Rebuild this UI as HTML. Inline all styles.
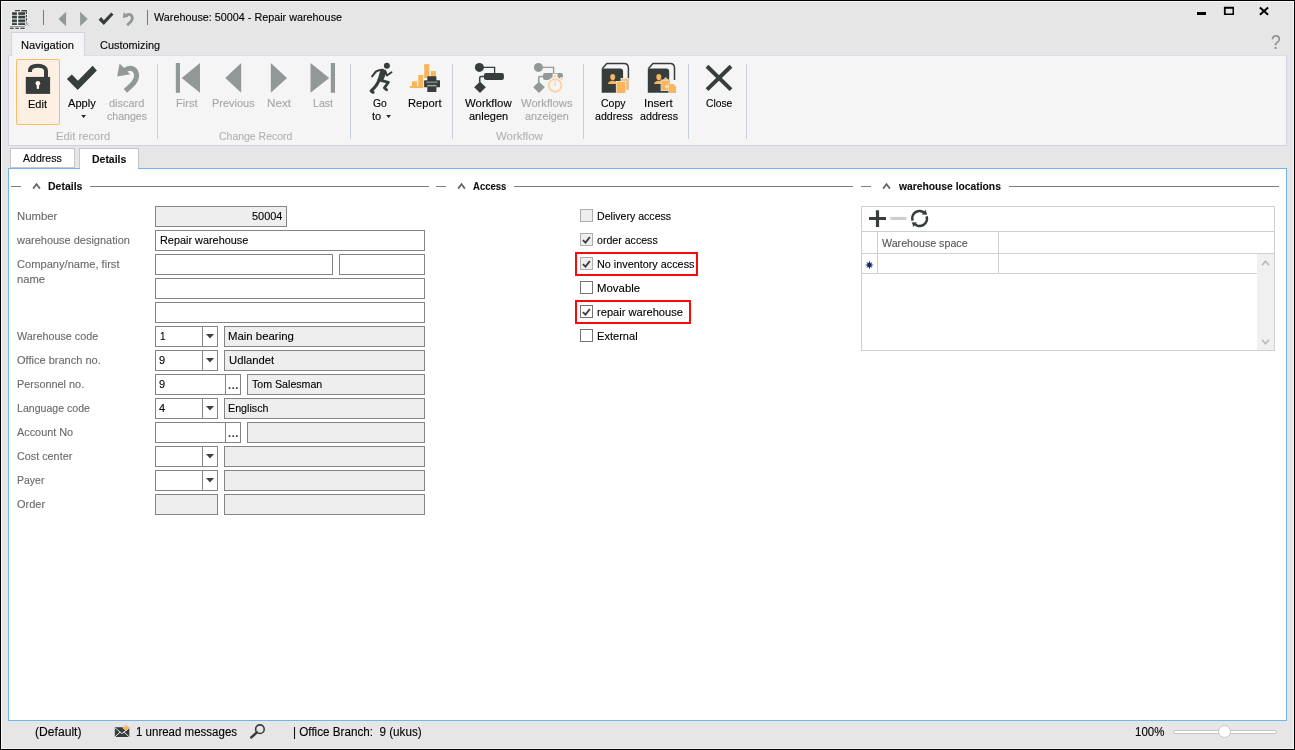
<!DOCTYPE html>
<html lang="en"><head><meta charset="utf-8"><title>Warehouse: 50004 - Repair warehouse</title>
<style>
*{box-sizing:border-box;margin:0;padding:0}
html,body{width:1295px;height:750px;overflow:hidden;background:#e6e6e6}
body{position:relative;font-family:"Liberation Sans",sans-serif;font-size:11px;color:#1e1e1e}
#w{position:absolute;left:0;top:0;width:1295px;height:750px;will-change:transform}
.a{position:absolute}
.t{position:absolute;white-space:pre;line-height:20px;transform-origin:0 0;-webkit-text-stroke:.12px currentColor}
.frame{left:0;top:0;width:1295px;height:750px;border:1px solid #000;pointer-events:none}
.hl{left:1px;top:1px;width:1293px;height:748px;border:1px solid #f6f6f6}
.ribbon{left:8px;top:55px;width:1279px;height:91px;background:#f5f5f5;border:1px solid #d0d3e2;border-top-color:#dadcea}
.navtab{left:11px;top:32px;width:74px;height:24px;background:#f5f5f5;border:1px solid #d0d3e2;border-bottom:0}
.sep{width:1px;background:#c9cde0;top:64px;height:75px}
.editbtn{left:16px;top:59px;width:44px;height:66px;background:#fdf0e2;border:1px solid #f6bc6a;border-radius:2px}
.pane{left:8px;top:168px;width:1279px;height:553px;background:#fff;border:1px solid #73b5ea}
.dtab{background:#fff;border:1px solid #c6c6c6}
.f{position:absolute;height:21px;border:1px solid #848484;background:#fff}
.f.d{background:#eee}
.cb{position:absolute;width:13px;height:13px;border:1px solid #747474;background:#fff}
.cb.d{border-color:#adadad;background:#eee}
.ln{position:absolute;height:1px;background:#7d7d7d}
.red{position:absolute;border:2px solid #f70a0a}
.g{position:absolute;background:#cfcfcf}
svg{position:absolute;overflow:visible}
</style></head>
<body>
<div id="w">
<div class="a hl"></div>
<svg style="left:9px;top:9px" width="21" height="21" viewBox="9 9 21 21">
<path d="M14.600 9.400h13v13.600l-2 2.400v4h-16.200v-3.600h1.800v-13.400z" fill="#f1f1f1"/>
<rect x="12" y="12.300" width="4.900" height="12.700" fill="#b9bcbc"/><rect x="18.300" y="12.300" width="6.800" height="12.700" fill="#b9bcbc"/>
<g fill="#373d3d">
<path d="M15.400 10h4.600v1.200h-5.700zM21.800 10h5.200v1.600h-6.200z"/>
<rect x="12" y="12.300" width="4.900" height="2.500"/><rect x="18.300" y="12.300" width="6.800" height="2.500"/>
<rect x="12" y="16" width="4.900" height="2.200"/><rect x="18.300" y="16" width="6.800" height="2.200"/>
<rect x="12" y="19.700" width="4.900" height="2.200"/><rect x="18.300" y="19.700" width="6.800" height="2.200"/>
<rect x="12" y="23.200" width="4.900" height="1.800"/><rect x="18.300" y="23.200" width="6.800" height="1.800"/>
<rect x="9.900" y="26.200" width="15" height="0.900" fill="#7a7f7f"/>
<rect x="9.900" y="27.700" width="3.800" height="1.200"/><rect x="15.300" y="27.700" width="3.600" height="1.200"/><rect x="20.300" y="27.700" width="4.400" height="1.200"/>
</g>
<path d="M26.400 11.500v11" stroke="#373d3d" stroke-width="1.100" stroke-dasharray="2.400 1" fill="none"/>
<path d="M25.400 25.800l2.600-2.600M26.400 23.400l2 2" stroke="#373d3d" stroke-width="0.700" stroke-dasharray="1.200 0.800" fill="none"/>
</svg>
<div class="a" style="left:43px;top:10px;width:1px;height:15px;background:#777"></div>
<div class="a" style="left:147px;top:10px;width:1px;height:15px;background:#777"></div>
<svg style="left:56px;top:8px" width="82" height="22" viewBox="56 8 82 22">
<path d="M58.5 19l7.6-7.2v14.4z" fill="#929797"/>
<path d="M87.7 19l-7.6-7.2v14.4z" fill="#929797"/>
<path d="M98.600 19.700L101.200 17.100L103.800 20.200L111.200 12.500L113.500 14.500L103.800 25z" fill="#373d3d"/>
<path d="M123.800 12l-1.100 6 5.600-1.300z" fill="#929797"/>
<path d="M126.300 15.300c3-2.200 6.200-0.300 6 3.200-0.200 2.800-2.900 4.600-5.200 6.600" stroke="#929797" stroke-width="2.800" fill="none"/>
</svg>
<div class="a" style="left:1197px;top:12px;width:9px;height:3px;background:#000"></div>
<svg style="left:1223px;top:6px" width="12" height="10" viewBox="1223 6 12 10"><path d="M1223.900 6.800h10.100v8.200h-10.100zM1225.700 8.800v4.800h6.800v-4.800z" fill="#000" fill-rule="evenodd"/></svg>
<svg style="left:1258px;top:6px" width="12" height="10" viewBox="1258 6 12 10"><path d="M1259.900 7.400l8.200 7.400M1268.100 7.400l-8.200 7.400" stroke="#000" stroke-width="2" fill="none"/></svg>
<div class="t" style="left:1271px;top:30px;font-size:20px;line-height:24px;color:#8e8e8e;transform:scaleX(.87)">?</div>
<div class="a ribbon"></div>
<div class="a navtab"></div>
<div class="a editbtn"></div>
<div class="a sep" style="left:157px"></div>
<div class="a sep" style="left:350px"></div>
<div class="a sep" style="left:452px"></div>
<div class="a sep" style="left:583px"></div>
<div class="a sep" style="left:688px"></div>
<div class="a sep" style="left:746px"></div>
<svg style="left:0;top:55px" width="760" height="70" viewBox="0 55 760 70">
<!-- lock -->
<rect x="25.8" y="76.9" width="24.3" height="17" fill="#373d3d"/>
<path d="M30 72v-1c0-3 2.6-5.2 7.8-5.2s8.200 2.200 8.200 5.200v6.500" stroke="#373d3d" stroke-width="4" fill="none"/>
<circle cx="37.900" cy="83.300" r="2.300" fill="#fff9f2"/><rect x="36.700" y="83.400" width="2.400" height="5.600" rx=".9" fill="#fff9f2"/>
<!-- apply check -->
<path d="M66.900 79.100l4.900-4.500 6.100 6.100 14.700-14.900 4.300 4.600-19.200 19.700z" fill="#373d3d"/>
<path d="M81.200 115h4.800l-2.400 3z" fill="#222"/>
<!-- discard -->
<path d="M119.600 63.600l-2.400 12.800 12.900-2.200z" fill="#929797"/>
<path d="M124.500 70.500c6.500-4.800 12.300-1 12.100 5.500-.2 6.300-5.800 9.800-11.200 14.900" stroke="#929797" stroke-width="5" fill="none"/>
<!-- first prev next last -->
<g fill="#929797">
<rect x="175.800" y="63" width="4.200" height="29.800"/><path d="M181.700 77.900l18.300-14.900v29.800z"/>
<path d="M225.300 77.900l15.900-14.900v29.800z"/>
<path d="M287 77.900l-16.200-14.900v29.800z"/>
<path d="M329.200 77.900l-18.700-14.900v29.800z"/><rect x="330.800" y="63" width="4.200" height="29.800"/>
</g>
<!-- runner -->
<g fill="none" stroke="#373d3d" stroke-linecap="round" stroke-linejoin="round">
<circle cx="386.900" cy="65.800" r="3" fill="#373d3d" stroke="none"/>
<path d="M381 68.800L385.800 70L386.400 72.600L382.700 81.700L377.400 80.200L379.800 72.200z" fill="#373d3d" stroke="none"/>
<path d="M382.800 69.700c-2.600 0-5 .6-7 1.900l-3.600 4.800" stroke-width="2.100"/>
<path d="M385.300 71.200l1.600 4.300 4.600-3.200" stroke-width="2"/>
<path d="M380.800 80.300l7.600 2-4 5.600 2.200 1.900" stroke-width="2.800"/>
<path d="M379.200 79.800c-1.400 4-4.200 7.800-8 11.200l1.800 1.300" stroke-width="3.200"/>
</g>
<path d="M386.200 115h4.800l-2.400 3z" fill="#222"/>
<!-- report -->
<g fill="#f9b55c">
<rect x="410" y="86" width="13.200" height="2"/><rect x="412" y="81.300" width="4.900" height="5"/>
<rect x="418.200" y="75" width="5" height="13"/><rect x="424.200" y="64.100" width="5.200" height="14"/><rect x="430.800" y="71" width="5" height="7"/>
</g>
<g fill="#373d3d">
<rect x="427.300" y="76.200" width="9.100" height="5" rx=".6"/>
<rect x="424.100" y="80.200" width="15.900" height="7" rx=".5"/>
<rect x="426.300" y="81.300" width="11.100" height="1.900" fill="#767b7b"/>
<rect x="427.300" y="85.400" width="9.100" height="1" fill="#f5f5f5"/>
<rect x="427.300" y="86.400" width="9.100" height="5.600" rx=".6"/>
</g>
<!-- workflow -->
<g fill="#373d3d" stroke="#373d3d">
<circle cx="479.400" cy="67.400" r="4.500" stroke="none"/>
<path d="M483 67.400h11.600v6" stroke-width="1.300" fill="none"/>
<rect x="484" y="73" width="19.900" height="6.900" rx="2" stroke="none"/>
<path d="M485 76.500h-3.800q-1.500 0-1.500 1.500v4" stroke-width="1.500" fill="none"/>
<path d="M480 81.500l5.800 5.800-5.800 5.800-5.800-5.800z" stroke="none"/>
</g>
<!-- workflows disabled -->
<g fill="#929797" stroke="#929797">
<circle cx="538.400" cy="67.400" r="4.500" stroke="none"/>
<path d="M542 67.400h11.600v6" stroke-width="1.300" fill="none"/>
<rect x="543" y="73" width="19.900" height="6.900" rx="2" stroke="none"/>
<path d="M544 76.500h-3.800q-1.500 0-1.500 1.500v4" stroke-width="1.500" fill="none"/>
<path d="M539 81.500l5.800 5.800-5.800 5.800-5.800-5.800z" stroke="none"/>
</g>
<circle cx="555.100" cy="85.400" r="8.400" fill="#f5f5f5"/>
<rect x="552.600" y="73.600" width="5" height="4.600" fill="#f5f5f5"/>
<circle cx="555.100" cy="85.400" r="6.300" fill="#f7f5f2" stroke="#f9d3a3" stroke-width="1.900"/>
<rect x="554" y="75" width="2.200" height="2.200" fill="#f9d3a3"/>
<rect x="554.500" y="80.600" width="1.200" height="5.400" fill="#f9d3a3"/>
<circle cx="561.800" cy="78.800" r="1.900" fill="#f5f5f5"/><circle cx="561.800" cy="78.800" r="1.100" fill="#f9d3a3"/>
<!-- copy address -->
<g id="book">
<path d="M602.400 68.400l4.400-4.900h17.200q4.400 0 4.400 4.400v12" stroke="#373d3d" stroke-width="1.500" fill="#f5f5f5"/>
<path d="M601.700 68.400h18.400q3 0 3 3v21.300h-21.400z" fill="#373d3d"/>
<ellipse cx="612.700" cy="77" rx="2.500" ry="3.100" fill="#f9b55c"/>
<path d="M608 83.900c0-2 2.200-2.600 3.400-3.200h2.600c1.200.6 3.300 1.200 3.300 3.200z" fill="#f9b55c"/>
</g>
<rect x="620.600" y="78" width="8.800" height="12.200" fill="#f5f5f5"/>
<rect x="621.100" y="78.500" width="7.900" height="11.300" fill="#e9c193"/>
<rect x="615.900" y="81" width="10" height="12.400" fill="#f5f5f5"/>
<rect x="616.500" y="81.600" width="8.900" height="11.400" fill="#f9b55c"/>
<!-- insert address -->
<g transform="translate(46.100 0)">
<path d="M602.400 68.400l4.400-4.900h17.200q4.400 0 4.400 4.400v12" stroke="#373d3d" stroke-width="1.500" fill="#f5f5f5"/>
<path d="M601.700 68.400h18.400q3 0 3 3v21.300h-21.400z" fill="#373d3d"/>
<ellipse cx="612.700" cy="77" rx="2.500" ry="3.100" fill="#f9b55c"/>
<path d="M608 83.900c0-2 2.200-2.600 3.400-3.200h2.600c1.200.6 3.300 1.200 3.300 3.200z" fill="#f9b55c"/>
</g>
<rect x="660.700" y="79.600" width="9.800" height="11.400" fill="#f5f5f5"/>
<rect x="661.200" y="80.100" width="8.800" height="10.400" fill="#f9b55c"/>
<path d="M663.200 80.600c0-1.400 1-1.400 1.400-1.500.2-1 .5-1.500 1.100-1.500s.9.500 1.100 1.500c.4.100 1.400.1 1.400 1.500z" fill="#f9b55c" stroke="#f5f5f5" stroke-width=".5"/>
<path d="M664.500 86.500l2.400-2.200v1.500h2v1.500h-2v1.500z" fill="#fbe3c3"/>
<rect x="668.500" y="83.500" width="8.100" height="10.100" fill="#f5f5f5"/>
<path d="M669 84h5l2.100 2.100v7h-7.100z" fill="#f9b55c"/>
<path d="M674 84v2.100h2.100z" fill="#fbe3c3"/>
<!-- close -->
<path d="M707 66.300l24 23.300M731 66.300l-24 23.300" stroke="#373d3d" stroke-width="4" fill="none"/>
</svg>
<div class="a pane"></div>
<div class="a dtab" style="left:10px;top:148px;width:65px;height:20px"></div>
<div class="a dtab" style="left:79px;top:148px;width:60px;height:20px;border-bottom:0"></div><div class="a" style="left:80px;top:168px;width:58px;height:1px;background:#fff"></div>
<div class="ln" style="left:11px;top:186px;width:10px"></div>
<svg style="left:32px;top:182px" width="9" height="8" viewBox="0 0 9 8"><path d="M1.100 6.600l3.400-4.300 3.400 4.300" stroke="#666" stroke-width="1.800" fill="none"/></svg>
<div class="ln" style="left:90px;top:186px;width:339px"></div>
<div class="ln" style="left:436px;top:186px;width:10px"></div>
<svg style="left:457px;top:182px" width="9" height="8" viewBox="0 0 9 8"><path d="M1.100 6.600l3.400-4.300 3.400 4.300" stroke="#666" stroke-width="1.800" fill="none"/></svg>
<div class="ln" style="left:514px;top:186px;width:339px"></div>
<div class="ln" style="left:861px;top:186px;width:10px"></div>
<svg style="left:882px;top:182px" width="9" height="8" viewBox="0 0 9 8"><path d="M1.100 6.600l3.400-4.300 3.400 4.300" stroke="#666" stroke-width="1.800" fill="none"/></svg>
<div class="ln" style="left:1009px;top:186px;width:270px"></div>
<div class="f d" style="left:155px;top:206px;width:132px"></div>
<div class="f" style="left:155px;top:230px;width:270px"></div>
<div class="f" style="left:155px;top:254px;width:178px"></div>
<div class="f" style="left:339px;top:254px;width:86px"></div>
<div class="f" style="left:155px;top:278px;width:270px"></div>
<div class="f" style="left:155px;top:302px;width:270px"></div>
<div class="f" style="left:155px;top:326px;width:63px"></div>
<div class="a" style="left:202px;top:327px;width:1px;height:19px;background:#848484"></div>
<svg style="left:206px;top:334px" width="8" height="5" viewBox="0 0 8 5"><path d="M0 0h8l-4 4.500z" fill="#404040"/></svg>
<div class="f d" style="left:224px;top:326px;width:201px"></div>
<div class="f" style="left:155px;top:350px;width:63px"></div>
<div class="a" style="left:202px;top:351px;width:1px;height:19px;background:#848484"></div>
<svg style="left:206px;top:358px" width="8" height="5" viewBox="0 0 8 5"><path d="M0 0h8l-4 4.500z" fill="#404040"/></svg>
<div class="f d" style="left:224px;top:350px;width:201px"></div>
<div class="f" style="left:155px;top:374px;width:71px"></div>
<div class="f" style="left:225px;top:374px;width:16px"></div>
<div class="t" style="left:228px;top:375.1px;font-weight:700;letter-spacing:.62px;color:#3c3c3c">...</div>
<div class="f d" style="left:247px;top:374px;width:178px"></div>
<div class="f" style="left:155px;top:398px;width:63px"></div>
<div class="a" style="left:202px;top:399px;width:1px;height:19px;background:#848484"></div>
<svg style="left:206px;top:406px" width="8" height="5" viewBox="0 0 8 5"><path d="M0 0h8l-4 4.500z" fill="#404040"/></svg>
<div class="f d" style="left:224px;top:398px;width:201px"></div>
<div class="f" style="left:155px;top:422px;width:71px"></div>
<div class="f" style="left:225px;top:422px;width:16px"></div>
<div class="t" style="left:228px;top:423.1px;font-weight:700;letter-spacing:.62px;color:#3c3c3c">...</div>
<div class="f d" style="left:247px;top:422px;width:178px"></div>
<div class="f" style="left:155px;top:446px;width:63px"></div>
<div class="a" style="left:202px;top:447px;width:1px;height:19px;background:#848484"></div>
<svg style="left:206px;top:454px" width="8" height="5" viewBox="0 0 8 5"><path d="M0 0h8l-4 4.500z" fill="#404040"/></svg>
<div class="f d" style="left:224px;top:446px;width:201px"></div>
<div class="f" style="left:155px;top:470px;width:63px"></div>
<div class="a" style="left:202px;top:471px;width:1px;height:19px;background:#848484"></div>
<svg style="left:206px;top:478px" width="8" height="5" viewBox="0 0 8 5"><path d="M0 0h8l-4 4.500z" fill="#404040"/></svg>
<div class="f d" style="left:224px;top:470px;width:201px"></div>
<div class="f d" style="left:155px;top:494px;width:63px"></div>
<div class="f d" style="left:224px;top:494px;width:201px"></div>
<div class="cb d" style="left:580px;top:209px"></div>
<div class="cb d" style="left:580px;top:233px"><svg style="left:0;top:0" width="11" height="11" viewBox="0 0 11 11"><path d="M1.900 6.100L4.500 8.600L8.900 3" stroke="#3a3f3f" stroke-width="1.950" fill="none"/></svg></div>
<div class="cb d" style="left:580px;top:257px"><svg style="left:0;top:0" width="11" height="11" viewBox="0 0 11 11"><path d="M1.900 6.100L4.500 8.600L8.900 3" stroke="#3a3f3f" stroke-width="1.950" fill="none"/></svg></div>
<div class="cb" style="left:580px;top:281px"></div>
<div class="cb" style="left:580px;top:305px"><svg style="left:0;top:0" width="11" height="11" viewBox="0 0 11 11"><path d="M1.900 6.100L4.500 8.600L8.900 3" stroke="#3a3f3f" stroke-width="1.950" fill="none"/></svg></div>
<div class="cb" style="left:580px;top:329px"></div>
<div class="red" style="left:575px;top:252px;width:123px;height:24px"></div>
<div class="red" style="left:575px;top:300px;width:116px;height:24px"></div>
<div class="a" style="left:861px;top:206px;width:414px;height:145px;border:1px solid #cfcfcf;background:#fff"></div>
<div class="a" style="left:1257px;top:254px;width:17px;height:96px;background:#f0f0f0"></div>
<div class="g" style="left:861px;top:231px;width:414px;height:1px"></div>
<div class="g" style="left:861px;top:253px;width:414px;height:1px"></div>
<div class="g" style="left:861px;top:273px;width:396px;height:1px"></div>
<div class="g" style="left:877px;top:232px;width:1px;height:42px"></div>
<div class="g" style="left:998px;top:232px;width:1px;height:42px"></div>
<svg style="left:861px;top:206px" width="414" height="145" viewBox="861 206 414 145">
<path d="M877.500 210.200v16.800M869 218.500h17" stroke="#373d3d" stroke-width="3.200" fill="none"/>
<rect x="890.300" y="216.900" width="16.200" height="3.100" fill="#cdcdcd"/>
<path d="M912.6 220.6A7.25 7.25 0 0 1 924.6 213.2" stroke="#373d3d" stroke-width="2.6" fill="none"/>
<path d="M926.6 216.4A7.25 7.25 0 0 1 914.6 223.8" stroke="#373d3d" stroke-width="2.6" fill="none"/>
<path d="M925.7 209.7l1.4 5.1-5.3-.4z" fill="#373d3d"/>
<path d="M911.8 222.300l5.2.2-3.600 4.500z" fill="#373d3d"/>
<path d="M869.4 260.6l.8 2.700 2.300-1.400-1.400 2.300 2.700.8-2.700.8 1.400 2.300-2.300-1.400-.8 2.700-.8-2.700-2.300 1.400 1.400-2.300-2.700-.8 2.700-.8-1.400-2.300 2.300 1.400z" fill="#14266b"/>
<path d="M1262 265.200l3.500-4 3.500 4" stroke="#b8b8b8" stroke-width="1.600" fill="none"/>
<path d="M1262 339.800l3.500 4 3.500-4" stroke="#b8b8b8" stroke-width="1.600" fill="none"/>
</svg>
<svg style="left:110px;top:722px" width="160" height="20" viewBox="110 722 160 20">
<rect x="114.800" y="727.200" width="14.500" height="9.800" fill="#373d3d"/>
<path d="M114.800 727.600l7.200 6 7.300-6M114.800 737l5.400-5M129.300 737l-5.400-5" stroke="#e6e6e6" stroke-width="1" fill="none"/>
<path d="M126 724.400l3.300 3.300-3.300 3.300-3.300-3.300z" fill="#f9b55c" stroke="#e6e6e6" stroke-width=".6"/>
<circle cx="259.900" cy="729.200" r="4.300" stroke="#373d3d" stroke-width="1.600" fill="none"/>
<path d="M256.900 732.400l-5.600 5" stroke="#373d3d" stroke-width="2.600" stroke-linecap="round" fill="none"/>
</svg>
<div class="a" style="left:1173px;top:730px;width:104px;height:4px;background:#fff;border:1px solid #c4c4c4;border-radius:2px"></div>
<div class="a" style="left:1218px;top:725px;width:13px;height:13px;background:#fff;border:1px solid #c4c4c4;border-radius:50%"></div>
<div class="t" style="left:154px;top:7.19px;color:#000;transform:scaleX(0.9814)">Warehouse: 50004 - Repair warehouse</div>
<div class="t" style="left:21px;top:35.19px;color:#000;transform:scaleX(1.0169)">Navigation</div>
<div class="t" style="left:100px;top:35.19px;color:#000;transform:scaleX(0.9924)">Customizing</div>
<div class="t" style="left:28px;top:93.69px;color:#000;transform:scaleX(1.0000)">Edit</div>
<div class="t" style="left:68px;top:92.89px;color:#000;transform:scaleX(1.0109)">Apply</div>
<div class="t" style="left:109px;top:92.89px;color:#a6a6a6;transform:scaleX(0.9956)">discard</div>
<div class="t" style="left:107px;top:105.89px;color:#a6a6a6;transform:scaleX(0.9595)">changes</div>
<div class="t" style="left:56px;top:125.89px;color:#b2b2b2;transform:scaleX(1.0194)">Edit record</div>
<div class="t" style="left:176px;top:92.89px;color:#a6a6a6;transform:scaleX(1.0123)">First</div>
<div class="t" style="left:212px;top:92.89px;color:#a6a6a6;transform:scaleX(0.9976)">Previous</div>
<div class="t" style="left:267px;top:92.89px;color:#a6a6a6;transform:scaleX(1.0605)">Next</div>
<div class="t" style="left:313px;top:92.89px;color:#a6a6a6;transform:scaleX(0.9620)">Last</div>
<div class="t" style="left:219px;top:125.89px;color:#b2b2b2;transform:scaleX(0.9518)">Change Record</div>
<div class="t" style="left:373px;top:92.89px;color:#000;transform:scaleX(0.9455)">Go</div>
<div class="t" style="left:372px;top:105.89px;color:#000;transform:scaleX(1.0000)">to</div>
<div class="t" style="left:408px;top:92.89px;color:#000;transform:scaleX(1.0156)">Report</div>
<div class="t" style="left:465px;top:92.89px;color:#000;transform:scaleX(1.0356)">Workflow</div>
<div class="t" style="left:469px;top:105.89px;color:#000;transform:scaleX(1.0000)">anlegen</div>
<div class="t" style="left:521px;top:92.89px;color:#a6a6a6;transform:scaleX(1.0189)">Workflows</div>
<div class="t" style="left:525px;top:105.89px;color:#a6a6a6;transform:scaleX(0.9816)">anzeigen</div>
<div class="t" style="left:496px;top:125.89px;color:#b2b2b2;transform:scaleX(1.0378)">Workflow</div>
<div class="t" style="left:601px;top:92.89px;color:#000;transform:scaleX(0.9584)">Copy</div>
<div class="t" style="left:595px;top:105.89px;color:#000;transform:scaleX(0.9647)">address</div>
<div class="t" style="left:644px;top:92.89px;color:#000;transform:scaleX(1.0453)">Insert</div>
<div class="t" style="left:640px;top:105.89px;color:#000;transform:scaleX(0.9725)">address</div>
<div class="t" style="left:706px;top:92.89px;color:#000;transform:scaleX(0.9358)">Close</div>
<div class="t" style="left:23px;top:147.69px;color:#000;transform:scaleX(0.9600)">Address</div>
<div class="t" style="left:92px;top:148.69px;color:#111;transform:scaleX(0.9514);font-weight:700">Details</div>
<div class="t" style="left:48px;top:175.99px;color:#111;transform:scaleX(0.9543);font-weight:700">Details</div>
<div class="t" style="left:473px;top:175.99px;color:#111;transform:scaleX(0.8658);font-weight:700">Access</div>
<div class="t" style="left:899px;top:175.99px;color:#111;transform:scaleX(0.9364);font-weight:700">warehouse locations</div>
<div class="t" style="left:17px;top:205.89px;color:#6a6a6a;transform:scaleX(1.0316)">Number</div>
<div class="t" style="left:17px;top:229.89px;color:#6a6a6a;transform:scaleX(0.9973)">warehouse designation</div>
<div class="t" style="left:17px;top:253.79px;color:#6a6a6a;transform:scaleX(1.0099)">Company/name, first</div>
<div class="t" style="left:17px;top:268.79px;color:#6a6a6a;transform:scaleX(1.0171)">name</div>
<div class="t" style="left:17px;top:325.89px;color:#6a6a6a;transform:scaleX(0.9824)">Warehouse code</div>
<div class="t" style="left:17px;top:349.89px;color:#6a6a6a;transform:scaleX(1.0024)">Office branch no.</div>
<div class="t" style="left:17px;top:373.89px;color:#6a6a6a;transform:scaleX(0.9894)">Personnel no.</div>
<div class="t" style="left:17px;top:397.89px;color:#6a6a6a;transform:scaleX(0.9624)">Language code</div>
<div class="t" style="left:17px;top:421.89px;color:#6a6a6a;transform:scaleX(0.9876)">Account No</div>
<div class="t" style="left:17px;top:445.89px;color:#6a6a6a;transform:scaleX(0.9820)">Cost center</div>
<div class="t" style="left:17px;top:469.89px;color:#6a6a6a;transform:scaleX(0.9527)">Payer</div>
<div class="t" style="left:17px;top:493.89px;color:#6a6a6a;transform:scaleX(1.0000)">Order</div>
<div class="t" style="left:252px;top:205.89px;color:#000;transform:scaleX(0.9950)">50004</div>
<div class="t" style="left:160px;top:229.89px;color:#000;transform:scaleX(0.9892)">Repair warehouse</div>
<div class="t" style="left:160px;top:325.89px;color:#000;transform:scaleX(0.9053)">1</div>
<div class="t" style="left:228px;top:325.89px;color:#000;transform:scaleX(1.0355)">Main bearing</div>
<div class="t" style="left:159px;top:349.89px;color:#000;transform:scaleX(1.0000)">9</div>
<div class="t" style="left:229px;top:349.89px;color:#000;transform:scaleX(1.0243)">Udlandet</div>
<div class="t" style="left:159px;top:373.89px;color:#000;transform:scaleX(1.0000)">9</div>
<div class="t" style="left:252px;top:373.89px;color:#000;transform:scaleX(0.9659)">Tom Salesman</div>
<div class="t" style="left:159px;top:397.89px;color:#000;transform:scaleX(1.0000)">4</div>
<div class="t" style="left:228px;top:397.89px;color:#000;transform:scaleX(0.9736)">Englisch</div>
<div class="t" style="left:597px;top:205.99px;color:#000;transform:scaleX(0.9624)">Delivery access</div>
<div class="t" style="left:597px;top:229.99px;color:#000;transform:scaleX(0.9639)">order access</div>
<div class="t" style="left:597px;top:253.99px;color:#000;transform:scaleX(0.9841)">No inventory access</div>
<div class="t" style="left:597px;top:277.99px;color:#000;transform:scaleX(1.0375)">Movable</div>
<div class="t" style="left:597px;top:301.99px;color:#000;transform:scaleX(1.0113)">repair warehouse</div>
<div class="t" style="left:597px;top:325.99px;color:#000;transform:scaleX(1.0065)">External</div>
<div class="t" style="left:882px;top:232.69px;color:#555;transform:scaleX(0.9698)">Warehouse space</div>
<div class="t" style="left:35px;top:721.84px;color:#000;transform:scaleX(1.0112);font-size:12px">(Default)</div>
<div class="t" style="left:136px;top:721.84px;color:#000;transform:scaleX(0.9587);font-size:12px">1 unread messages</div>
<div class="t" style="left:293px;top:721.84px;color:#000;transform:scaleX(0.9724);font-size:12px">| Office Branch:  9 (ukus)</div>
<div class="t" style="left:1135px;top:721.84px;color:#000;transform:scaleX(0.9573);font-size:12px">100%</div>
<div class="a frame"></div>
</div>
</body></html>
